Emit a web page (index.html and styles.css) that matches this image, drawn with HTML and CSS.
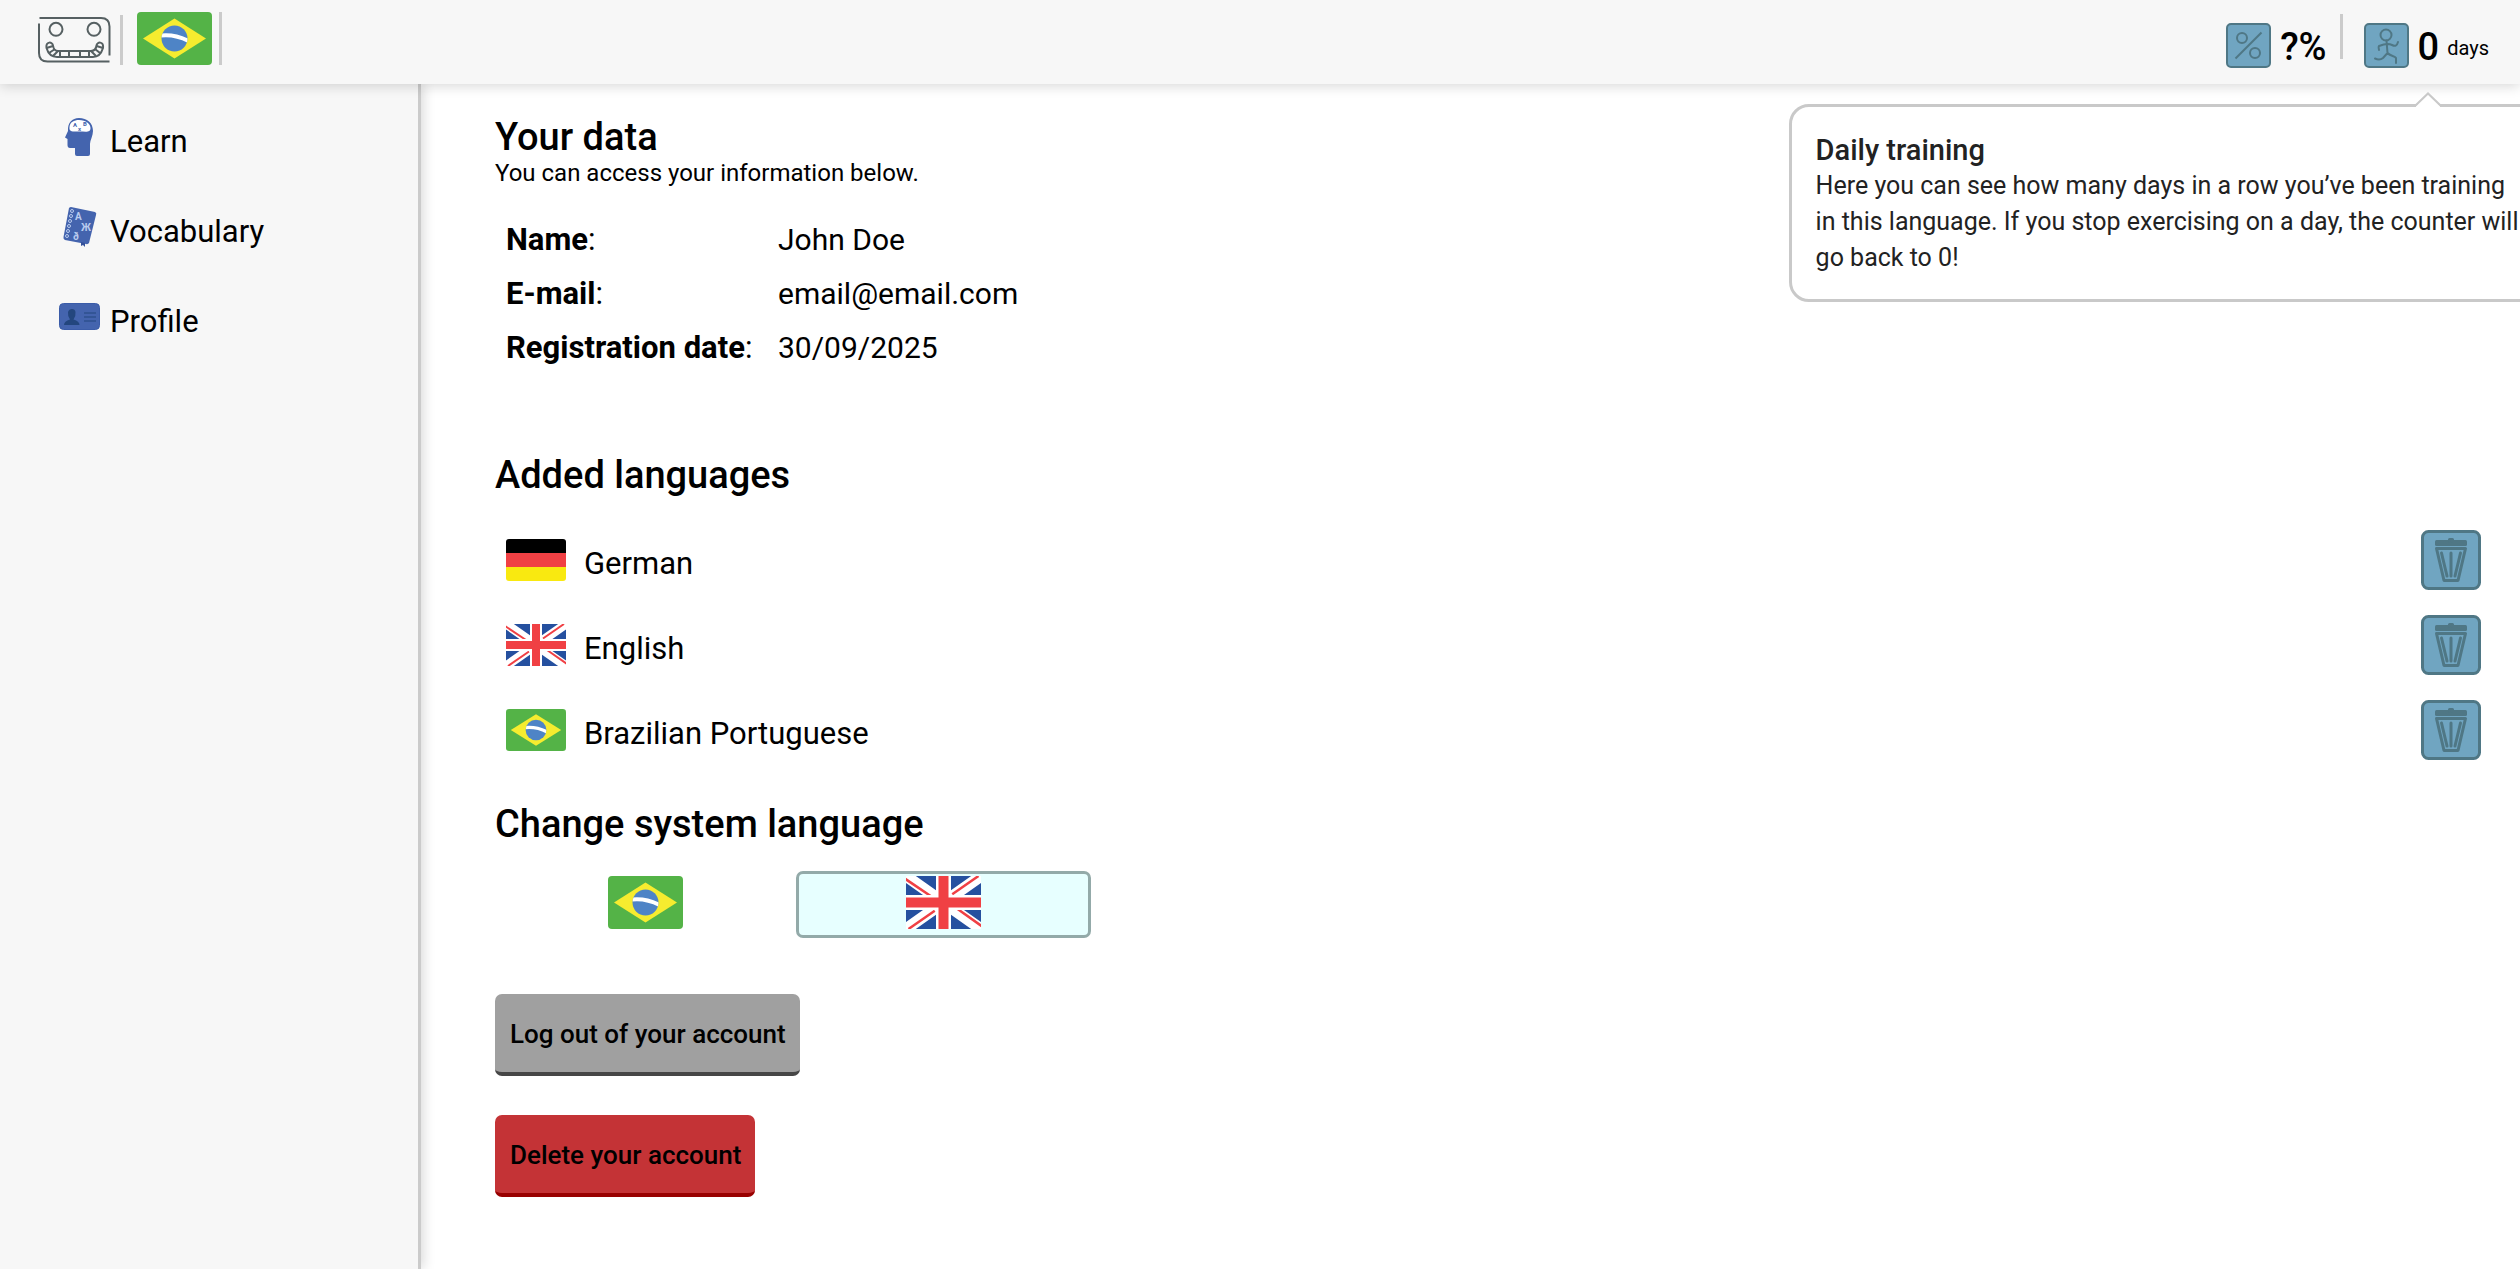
FILE: index.html
```html
<!DOCTYPE html>
<html lang="en">
<head>
<meta charset="utf-8">
<meta name="viewport" content="width=device-width, initial-scale=1">
<title>Profile</title>
<link rel="stylesheet" href="styles.css">
</head>
<body>
<svg class="sprite" aria-hidden="true">
  <symbol id="flag-br" viewBox="0 0 75 53" preserveAspectRatio="none">
    <rect width="75" height="53" rx="4" fill="#54b347"/>
    <path d="M37.500 6.500L69 26.500L37.500 46.500L6 26.500Z" fill="#f6ec2f"/>
    <clipPath id="globe"><circle cx="37.500" cy="26.500" r="13"/></clipPath>
    <circle cx="37.500" cy="26.500" r="13" fill="#4e84c6"/>
    <path clip-path="url(#globe)" d="M24 23.500Q38 22 51.500 29" fill="none" stroke="#fff" stroke-width="4"/>
  </symbol>
  <symbol id="flag-de" viewBox="0 0 60 42">
    <clipPath id="de-corners"><rect width="60" height="42" rx="3"/></clipPath>
    <g clip-path="url(#de-corners)">
      <rect width="60" height="14"/>
      <rect y="14" width="60" height="14" fill="#f04044"/>
      <rect y="28" width="60" height="14" fill="#f9e910"/>
    </g>
  </symbol>
  <symbol id="flag-gb" viewBox="0 0 60 42" preserveAspectRatio="none">
    <rect width="60" height="42" fill="#25509f"/>
    <path d="M0 0L60 42M60 0L0 42" stroke="#fff" stroke-width="9"/>
    <path d="M-1 2L20 16M58 0L37 14.500M2 42L23 27.500M61 40L41 26" stroke="#f04044" stroke-width="2"/>
    <path d="M30 0V42M0 21H60" stroke="#fff" stroke-width="12"/>
    <path d="M30 0V42M0 21H60" stroke="#f04044" stroke-width="8"/>
  </symbol>
  <symbol id="trash" viewBox="0 0 60 60">
    <rect x="1.500" y="1.500" width="57" height="57" rx="6" fill="#70a5c1" stroke="#4f7785" stroke-width="3"/>
    <g fill="none" stroke="#4f7785" stroke-width="3" stroke-linejoin="round" stroke-linecap="round">
      <path fill="#4f7785" d="M15.500 11.500H44.500V14.500H15.500Z"/>
      <path d="M28.500 11V9.500H31.500V11"/>
      <path d="M15.500 18.500H44.500L37 50.500H23Z"/>
      <path d="M20.500 23L26 46M30 23V46M39.500 23L34 46"/>
    </g>
  </symbol>
</svg>

<header class="topbar">
  <a class="brand" href="#" aria-label="Home">
    <svg width="73" height="48" viewBox="0 0 73 48" fill="none" stroke="#566062" stroke-width="2">
      <path d="M1.500 2H63Q71.500 2 71.500 10.500V39.500M1 7.500V37Q1 45.500 9.500 45.500H71.500"/>
      <circle cx="18" cy="13.300" r="6.500"/><circle cx="56" cy="13.300" r="6.500"/>
      <path d="M8.500 32C7.500 25 14.500 25.500 15 29.500C15.500 33 17 35 20 35H53C57 35 58 33 58.500 29.500C59 25.500 66 25 65 32C63.500 37 60 41 55 41H19C13 41 10 37 8.500 32Z"/>
      <path d="M8.500 32L15 30M11 37L17 33M15 40L20 35M22 35V41M31 35V41M42 35V41M51 35V41M58 40L53 35M62 37L57 33M65 32L58.500 30"/>
    </svg>
  </a>
  <span class="divider brand-divider"></span>
  <button class="current-language" aria-label="Brazilian Portuguese"><svg class="flag-large"><use href="#flag-br"/></svg></button>
  <span class="divider flag-divider"></span>

  <div class="stat score">
    <svg class="stat-icon" viewBox="0 0 45 45" fill="none" stroke="#4f7785" stroke-width="2">
      <rect x="1" y="1" width="43" height="43" rx="4" fill="#70a5c1"/>
      <circle cx="16" cy="15" r="5"/><circle cx="29" cy="30" r="5"/><path d="M35.500 9.500L9.500 35.500"/>
    </svg>
    <strong class="stat-value">?%</strong>
  </div>
  <span class="divider stat-divider"></span>
  <div class="stat streak">
    <svg class="stat-icon" viewBox="0 0 45 45" fill="none" stroke="#4f7785" stroke-width="2" stroke-linecap="round" stroke-linejoin="round">
      <rect x="1" y="1" width="43" height="43" rx="4" fill="#70a5c1"/>
      <circle cx="22" cy="12" r="5.500"/>
      <path d="M22.500 17.500L23.500 30M34 19C33 23 31 23.500 28 22C24 20 19 21.500 15 23C14 24 15 26 15 27M23.500 30L19 35C16 37.500 13 36.500 11 35.500M23.500 30C26 33 31 33 32 35V40"/>
    </svg>
    <strong class="stat-value">0</strong>
    <span class="stat-unit">days</span>
    <div class="tooltip" role="tooltip">
      <svg class="tooltip-arrow" width="26" height="16" viewBox="0 0 26 16"><path d="M1 14L13 2L25 14V16H1Z" fill="#fff"/><path d="M0 14L13 1.500L26 14" fill="none" stroke="#c9c9c9" stroke-width="2"/></svg>
      <h3>Daily training</h3>
      <p>Here you can see how many days in a row you’ve been training in this language. If you stop exercising on a day, the counter will go back to 0!</p>
    </div>
  </div>
</header>

<div class="layout">
  <nav class="sidebar">
    <a href="#">
      <svg class="nav-icon" viewBox="0 0 42 42">
        <path d="M21 2C29 2 35 7 35 15C35 20 32 24 32 28V38Q32 40 30 40H19Q17 40 17 38V32H12Q9.500 32 9.500 29V23L7 21.500L10 15C9.500 7 14 2 21 2Z" fill="#4464ae"/>
        <path d="M21 4C28 4 32.500 8 32.500 12C32.500 17 28 15.500 21 15.500C14 15.500 11 16 11.500 11C12 6 16 4 21 4Z" fill="#fff"/>
        <g fill="#4464ae" font-family="Roboto, sans-serif" font-weight="700" font-size="6"><text x="15" y="11">A</text><text x="25" y="10">B</text><text x="20" y="15">x</text></g>
      </svg>
      Learn
    </a>
    <a href="#">
      <svg class="nav-icon" viewBox="0 0 42 42">
        <path d="M13 1L37 6Q39 7 38 9L31 37Q30 38.500 28 38L7 34Q5 33 5.500 31L11 2Q12 1 13 1Z" fill="#4464ae"/>
        <path d="M23 36V40L25 39L27 41V37Z" fill="#34519a"/>
        <g fill="none" stroke="#b9cbee" stroke-width="1"><circle cx="14" cy="5" r="1.500"/><circle cx="13" cy="10" r="1.500"/><circle cx="12" cy="15" r="1.500"/><circle cx="11" cy="20" r="1.500"/><circle cx="10" cy="25" r="1.500"/><circle cx="9" cy="30" r="1.500"/></g>
        <g fill="#b9cbee" font-family="Roboto, sans-serif" font-weight="700" font-size="10"><text x="17" y="14">A</text><text x="23" y="25">Ж</text><text x="15" y="34">ð</text></g>
      </svg>
      Vocabulary
    </a>
    <a href="#">
      <svg class="nav-icon" viewBox="0 0 42 42">
        <rect x="1.500" y="7.500" width="40" height="26" rx="4" fill="#4464ae" stroke="#3b5ca8"/>
        <path d="M6 29Q6 25 12 23.500Q9.500 20 10 16Q11 13 14 13Q17 13 17.500 16Q18 20 15.500 23.500Q21.500 25 21.500 29Z" fill="#23467e"/>
        <path d="M26 17H38M26 21H38M26 25H38" stroke="#23467e"/>
      </svg>
      Profile
    </a>
  </nav>

  <main class="content">
    <section>
      <h2>Your data</h2>
      <p class="intro">You can access your information below.</p>
      <dl class="details">
        <dt><b>Name</b>:</dt><dd>John Doe</dd>
        <dt><b>E-mail</b>:</dt><dd>email@email.com</dd>
        <dt><b>Registration date</b>:</dt><dd>30/09/2025</dd>
      </dl>
    </section>

    <section class="languages">
      <h2>Added languages</h2>
      <ul>
        <li><svg class="flag-small"><use href="#flag-de"/></svg><span class="language-name">German</span><button class="remove" aria-label="Remove German"><svg><use href="#trash"/></svg></button></li>
        <li><svg class="flag-small"><use href="#flag-gb"/></svg><span class="language-name">English</span><button class="remove" aria-label="Remove English"><svg><use href="#trash"/></svg></button></li>
        <li><svg class="flag-small"><use href="#flag-br"/></svg><span class="language-name">Brazilian Portuguese</span><button class="remove" aria-label="Remove Brazilian Portuguese"><svg><use href="#trash"/></svg></button></li>
      </ul>
    </section>

    <section class="system-language">
      <h2>Change system language</h2>
      <div class="options">
        <button class="option" aria-label="Brazilian Portuguese"><svg class="flag-large"><use href="#flag-br"/></svg></button>
        <button class="option selected" aria-label="English" aria-pressed="true"><svg class="flag-large"><use href="#flag-gb"/></svg></button>
      </div>
    </section>

    <div class="account-actions">
      <button class="action">Log out of your account</button>
      <button class="action danger">Delete your account</button>
    </div>
  </main>
</div>
</body>
</html>
```
FILE: styles.css
```css
* { box-sizing: border-box; }

body {
  margin: 0;
  min-height: 100vh;
  display: flex;
  flex-direction: column;
  overflow-x: hidden;
  background: #fff;
  color: #000;
  font: 24px/36px Roboto, "Liberation Sans", sans-serif;
}

h2, h3, p, dl, dd, ul { margin: 0; padding: 0; }
h2 { font-size: 38px; line-height: 36px; font-weight: 500; }
a { color: inherit; text-decoration: none; }
svg { display: block; flex: none; }
button { margin: 0; padding: 0; border: 0; background: none; font: inherit; color: inherit; cursor: pointer; }

.sprite { position: absolute; width: 0; height: 0; }
.flag-large { width: 75px; height: 53px; }
.flag-small { width: 60px; height: 42px; }

/* Top bar */
.topbar {
  position: relative;
  z-index: 2;
  display: flex;
  align-items: flex-start;
  height: 84px;
  padding: 12px 31px 0 38px;
  background: #f7f7f7;
  box-shadow: 0 2px 12px rgba(0, 0, 0, 0.16);
}
.brand { padding-top: 4px; }
.divider { flex: none; width: 3px; background: #cbcbcb; }
.brand-divider { height: 50px; margin: 3px 14px 0 9px; }
.flag-divider { height: 53px; margin-left: 7px; }
.stat-divider { height: 45px; margin: 2px 21px 0 13px; }

.stat { position: relative; display: flex; align-items: center; height: 67px; }
.score { margin-left: auto; }
.stat-icon { width: 45px; height: 45px; margin-right: 9px; }
.stat-value { padding-top: 2px; font-size: 38px; font-weight: 500; }
.stat-unit { margin-left: 8px; padding-top: 4px; font-size: 20px; }

.tooltip {
  position: absolute;
  top: 92px;
  left: -575px;
  width: 764px;
  padding: 25px 24px 23px;
  border: 3px solid #c9c9c9;
  border-radius: 20px;
  background: #fff;
  color: #222;
  font-size: 25px;
}
.tooltip h3 { font-size: 29px; line-height: 36px; font-weight: 500; }
.tooltip-arrow { position: absolute; top: -15px; left: 623px; }

/* Page body */
.layout { flex: 1; display: flex; }
.sidebar {
  flex: none;
  width: 421px;
  padding-top: 13px;
  border-right: 3px solid #cbcbcb;
  background: #f7f7f7;
  box-shadow: 2px 0 12px rgba(0, 0, 0, 0.16);
}
.sidebar a {
  display: flex;
  align-items: center;
  gap: 10px;
  height: 90px;
  padding-left: 58px;
  font-size: 31px;
}
.nav-icon { width: 42px; height: 42px; margin-bottom: 10px; }

.content { flex: 1; padding: 35px 39px 70px 74px; }

.details {
  display: grid;
  grid-template-columns: minmax(272px, max-content) 1fr;
  margin: 22px 0 0 11px;
  font-size: 30px;
  line-height: 54px;
}
.details dt { font-size: 31px; }
.details b { font-weight: 700; }

.languages { margin-top: 82px; }
.languages ul { display: grid; gap: 25px; margin: 37px 0 0 11px; list-style: none; }
.languages li { display: flex; align-items: center; height: 60px; font-size: 31px; }
.language-name { padding: 8px 0 0 18px; }
.remove { margin-left: auto; }
.remove svg { width: 60px; height: 60px; }

.system-language { margin-top: 46px; }
.options { display: flex; gap: 3px; margin: 29px 0 0 3px; }
.option {
  display: flex;
  justify-content: center;
  width: 295px;
  height: 67px;
  padding-top: 2px;
  border: 3px solid transparent;
  border-radius: 7px;
}
.option.selected { border-color: #93aaa9; background: #e7ffff; }

.account-actions { display: flex; flex-direction: column; align-items: flex-start; gap: 39px; margin-top: 56px; }
.action {
  height: 82px;
  padding: 2px 14px 0 15px;
  border-bottom: 4px solid #464646;
  border-radius: 7px;
  background: #a0a0a0;
  font-size: 26px;
  font-weight: 500;
}
.action.danger { border-color: #980000; background: #c43336; }
```
